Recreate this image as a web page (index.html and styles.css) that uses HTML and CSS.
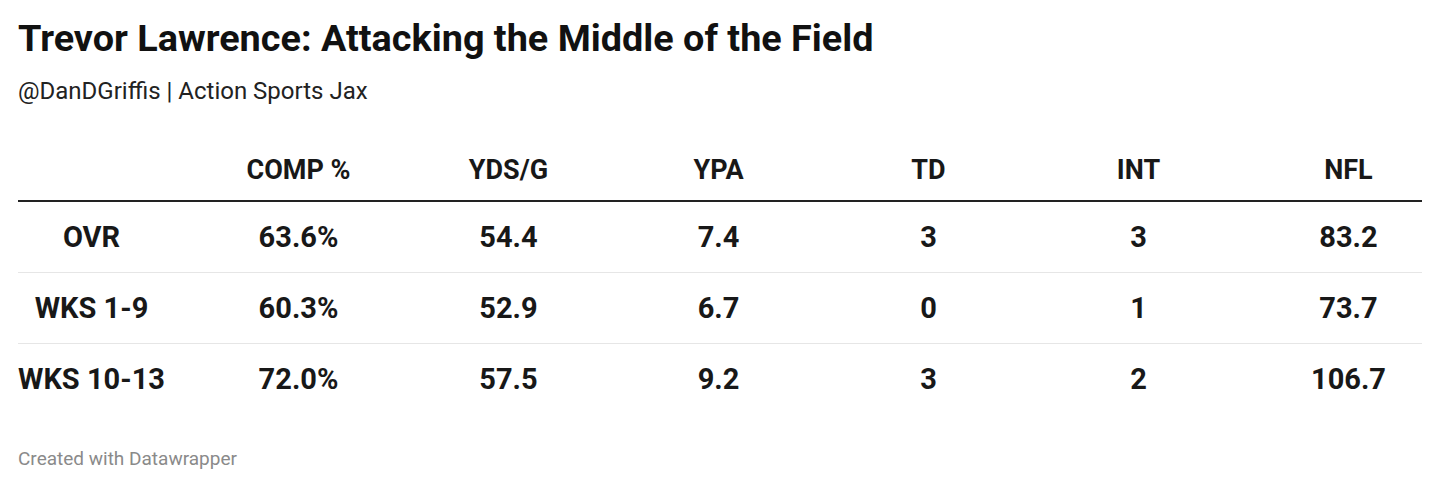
FILE: index.html
```html
<!DOCTYPE html>
<html lang="en">
<head>
<meta charset="utf-8">
<title>Trevor Lawrence: Attacking the Middle of the Field</title>
<link rel="stylesheet" href="styles.css">
</head>
<body>
<div class="chart">
  <h1 class="title">Trevor Lawrence: Attacking the Middle of the Field</h1>
  <p class="subtitle">@DanDGriffis | Action Sports Jax</p>
  <div class="table">
    <div class="row head">
      <div class="cell"></div>
      <div class="cell">COMP %</div>
      <div class="cell">YDS/G</div>
      <div class="cell">YPA</div>
      <div class="cell">TD</div>
      <div class="cell">INT</div>
      <div class="cell">NFL</div>
    </div>
    <div class="row body">
      <div class="cell">OVR</div>
      <div class="cell">63.6%</div>
      <div class="cell">54.4</div>
      <div class="cell">7.4</div>
      <div class="cell">3</div>
      <div class="cell">3</div>
      <div class="cell">83.2</div>
    </div>
    <div class="row body">
      <div class="cell">WKS 1-9</div>
      <div class="cell">60.3%</div>
      <div class="cell">52.9</div>
      <div class="cell">6.7</div>
      <div class="cell">0</div>
      <div class="cell">1</div>
      <div class="cell">73.7</div>
    </div>
    <div class="row body last">
      <div class="cell">WKS 10-13</div>
      <div class="cell">72.0%</div>
      <div class="cell">57.5</div>
      <div class="cell">9.2</div>
      <div class="cell">3</div>
      <div class="cell">2</div>
      <div class="cell">106.7</div>
    </div>
  </div>
  <p class="footer">Created with Datawrapper</p>
</div>
</body>
</html>
```
FILE: styles.css
```css
html, body {
  margin: 0;
  padding: 0;
  background: #ffffff;
}

body {
  font-family: Roboto, "Liberation Sans", Arial, sans-serif;
  color: #181818;
}

.chart {
  width: 1404px;
  padding: 16px 18px 0 18px;
}

.title {
  margin: 0;
  font-size: 37.8px;
  font-weight: 700;
  line-height: 45px;
  color: #111111;
}

.subtitle {
  margin: 16px 0 0 0;
  font-size: 24px;
  font-weight: 400;
  line-height: 28px;
  color: #222222;
}

.table {
  margin-top: 49px;
}

.row {
  display: grid;
  grid-template-columns: 147px repeat(6, 153px);
  column-gap: 57px;
  align-items: center;
}

.cell {
  text-align: center;
  white-space: nowrap;
}

.head {
  font-size: 27px;
  font-weight: 700;
  line-height: 32px;
  padding-bottom: 14px;
  border-bottom: 2px solid #222222;
}

.body {
  height: 70px;
  font-size: 29px;
  font-weight: 700;
  line-height: 34px;
  border-bottom: 1px solid #e6e6e6;
}

.body.last {
  border-bottom: none;
}

.footer {
  margin: 33px 0 0 0;
  font-size: 19px;
  line-height: 23px;
  color: #8a8a8a;
}
```
